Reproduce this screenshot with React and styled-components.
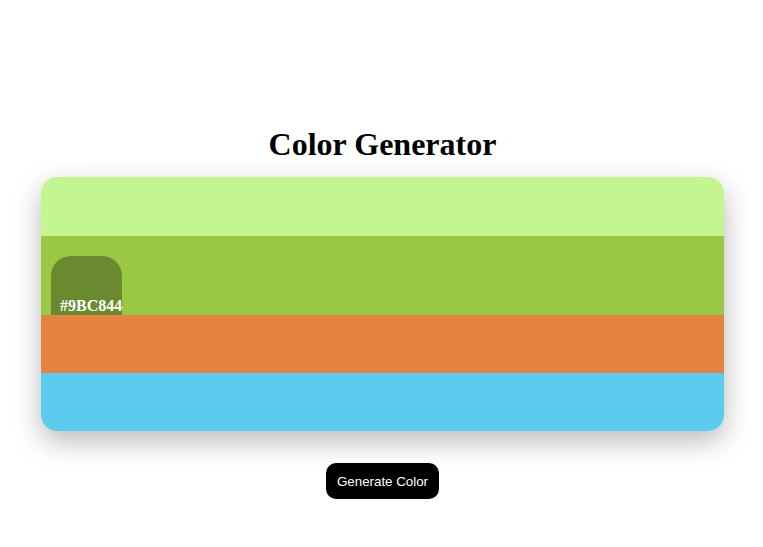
import React, { useState } from "react";
import styled, { createGlobalStyle } from "styled-components";

const GlobalStyle = createGlobalStyle`
  body {
    margin: 0;
    background: #fff;
    font-family: "Liberation Serif", "Times New Roman", serif;
  }
`;

const Page = styled.div`
  display: flex;
  flex-direction: column;
  align-items: center;
  padding: 126px 0 0 2px;
`;

const Title = styled.h1`
  margin: 0 0 14px;
  font-size: 32px;
  font-weight: bold;
  color: #000;
`;

const Palette = styled.div`
  width: 683px;
  border-radius: 16px;
  overflow: hidden;
  display: flex;
  flex-direction: column;
  box-shadow: 0 10px 28px rgba(0, 0, 0, 0.28);
`;

const Swatch = styled.div`
  height: ${(p) => p.$height}px;
  background: ${(p) => p.$color};
  display: flex;
  align-items: flex-end;
  padding-left: 10px;
  box-sizing: border-box;
`;

const Label = styled.div`
  width: 71px;
  height: 59px;
  box-sizing: border-box;
  padding-left: 9px;
  border-radius: 20px 20px 0 0;
  background: rgba(0, 0, 0, 0.31);
  display: flex;
  align-items: flex-end;
  color: #fff;
  font-size: 16px;
  font-weight: bold;
  line-height: 18px;
  white-space: nowrap;
`;

const GenerateButton = styled.button`
  margin-top: 32px;
  height: 36px;
  padding: 0 11px;
  border: none;
  border-radius: 10px;
  background: #000;
  color: #fff;
  font-family: "Liberation Sans", Arial, sans-serif;
  font-size: 13.333px;
  cursor: pointer;
`;

const swatches = [
  { color: "#C4F591", height: 59 },
  { color: "#9BC844", height: 79 },
  { color: "#E38241", height: 58 },
  { color: "#5BCCEE", height: 58 },
];

export default function App() {
  const [active] = useState(1);

  return (
    <>
      <GlobalStyle />
      <Page>
        <Title>Color Generator</Title>
        <Palette>
          {swatches.map((s, i) => (
            <Swatch key={s.color} $color={s.color} $height={s.height}>
              {i === active && <Label>{s.color}</Label>}
            </Swatch>
          ))}
        </Palette>
        <GenerateButton>Generate Color</GenerateButton>
      </Page>
    </>
  );
}
